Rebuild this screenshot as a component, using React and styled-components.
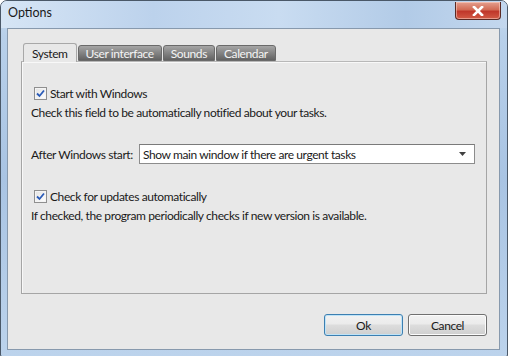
import React, { useState } from "react";
import styled, { createGlobalStyle } from "styled-components";

const GlobalStyle = createGlobalStyle`
  html, body {
    margin: 0;
    padding: 0;
    background: #ffffff;
  }
  body {
    font-family: Lato, "Liberation Sans", sans-serif;
    font-size: 12px;
    letter-spacing: -0.4px;
    color: #1a1a1a;
  }
`;

const tabs = ["System", "User interface", "Sounds", "Calendar"];

const CheckMark = () => (
  <svg width="9" height="9" viewBox="0 0 9 9">
    <path d="M1 4.5 L3.5 7 L8 1.5" fill="none" stroke="#2a5bb8" strokeWidth="1.8" />
  </svg>
);

const CheckRow = ({ label, checked, onToggle }) => (
  <CheckLine onClick={onToggle}>
    <Box>{checked && <CheckMark />}</Box>
    <span>{label}</span>
  </CheckLine>
);

export default function App() {
  const [active, setActive] = useState(0);
  const [startWin, setStartWin] = useState(true);
  const [updates, setUpdates] = useState(true);

  return (
    <>
      <GlobalStyle />
      <Window>
        <TitleBar>
          <Title>Options</Title>
          <CloseButton>
            <svg width="12" height="10" viewBox="0 0 12 10">
              <path d="M2 1 L10 9 M10 1 L2 9" stroke="#ffffff" strokeWidth="2.6" strokeLinecap="square" />
            </svg>
          </CloseButton>
        </TitleBar>
        <Client>
          <TabStrip>
            {tabs.map((t, i) => (
              <Tab key={t} $active={i === active} onClick={() => setActive(i)}>
                {t}
              </Tab>
            ))}
          </TabStrip>
          <Panel>
            <CheckRow label="Start with Windows" checked={startWin} onToggle={() => setStartWin(!startWin)} />
            <Hint>Check this field to be automatically notified about your tasks.</Hint>
            <SelectRow>
              <FieldLabel>After Windows start:</FieldLabel>
              <Select>
                <span>Show main window if there are urgent tasks</span>
                <svg width="7" height="4" viewBox="0 0 7 4">
                  <path d="M0 0 H7 L3.5 4 Z" fill="#404040" />
                </svg>
              </Select>
            </SelectRow>
            <CheckRow label="Check for updates automatically" checked={updates} onToggle={() => setUpdates(!updates)} />
            <Hint>If checked, the program periodically checks if new version is available.</Hint>
          </Panel>
          <ButtonRow>
            <Button $default>Ok</Button>
            <Button>Cancel</Button>
          </ButtonRow>
        </Client>
      </Window>
    </>
  );
}

const Window = styled.div`
  width: 506px;
  height: 355px;
  display: flex;
  flex-direction: column;
  border: 1px solid #4a5868;
  border-radius: 7px 7px 2px 2px;
  background: linear-gradient(180deg, #c8dbef 0%, #b8d0ea 10%, #a9c4e3 50%, #bcd3ec 100%);
  overflow: hidden;
`;

const TitleBar = styled.div`
  height: 28px;
  display: flex;
  align-items: flex-start;
  justify-content: space-between;
  padding-left: 7px;
  padding-right: 6px;
  background: linear-gradient(90deg, #d6e5f5 0%, #bcd2ec 30%, #c9dcf1 55%, #b2cbe7 80%, #c3d7ee 100%);
`;

const Title = styled.div`
  margin-top: 4px;
  font-size: 12.5px;
  letter-spacing: 0;
  color: #1a1a1a;
`;

const CloseButton = styled.div`
  width: 44px;
  height: 17px;
  margin-top: 1px;
  display: flex;
  align-items: center;
  justify-content: center;
  border: 1px solid #5a2a24;
  border-top: none;
  border-radius: 0 0 4px 4px;
  background: linear-gradient(180deg, #e4a08f 0%, #d26b55 45%, #c0372a 55%, #d25b45 100%);
  box-shadow: inset 0 0 0 1px rgba(255, 220, 210, 0.5);
`;

const Client = styled.div`
  flex: 1;
  margin: 0 7px 6px 6px;
  display: flex;
  flex-direction: column;
  padding: 14px 12px 13px 13px;
  background: #e8e8e8;
  border: 1px solid #8799ad;
`;

const TabStrip = styled.div`
  height: 18px;
  display: flex;
  align-items: flex-end;
  gap: 1px;
  padding-left: 2px;
  position: relative;
  z-index: 1;
`;

const Tab = styled.div`
  height: ${(p) => (p.$active ? "19px" : "16px")};
  margin-bottom: ${(p) => (p.$active ? "-1px" : "0")};
  padding: 0 ${(p) => (p.$active ? "8px" : "7px")};
  display: flex;
  align-items: center;
  box-sizing: border-box;
  border: 1px solid ${(p) => (p.$active ? "#a8a8a8" : "#6a6a6a")};
  border-bottom: ${(p) => (p.$active ? "none" : "1px solid #6a6a6a")};
  border-radius: 3px 3px 0 0;
  background: ${(p) =>
    p.$active
      ? "#e8e8e8"
      : "linear-gradient(180deg, #a6a6a6 0%, #8a8a8a 40%, #626262 100%)"};
  color: ${(p) => (p.$active ? "#1a1a1a" : "#f4f4f4")};
  cursor: default;
  white-space: nowrap;
`;

const Panel = styled.div`
  height: 233px;
  box-sizing: border-box;
  display: flex;
  flex-direction: column;
  padding: 23px 11px 0 9px;
  border: 1px solid #a5a5a5;
  border-top-color: #b8b8b8;
  box-shadow: inset 1px 1px 0 #f8f8f8;
`;

const CheckLine = styled.div`
  height: 16px;
  display: flex;
  align-items: center;
  gap: 3px;
  padding-left: 3px;
  cursor: default;
`;

const Box = styled.div`
  width: 11px;
  height: 11px;
  display: flex;
  align-items: center;
  justify-content: center;
  border: 1px solid #8f8f8f;
  background: linear-gradient(135deg, #e2e2e2 0%, #ffffff 100%);
  box-shadow: inset 0 0 0 1px #f4f4f4;
`;

const Hint = styled.div`
  height: 16px;
  line-height: 16px;
  margin-top: 4px;
  margin-bottom: 23px;
  white-space: nowrap;
`;

const SelectRow = styled.div`
  height: 20px;
  display: flex;
  align-items: center;
  justify-content: space-between;
  margin-bottom: 24px;
`;

const FieldLabel = styled.span`
  white-space: nowrap;
  flex-shrink: 0;
`;

const Select = styled.div`
  width: 336px;
  height: 20px;
  box-sizing: border-box;
  display: flex;
  align-items: center;
  justify-content: space-between;
  padding: 0 8px 0 3px;
  background: #ffffff;
  border: 1px solid #8c8c8c;
  border-top-color: #7a7a7a;
`;

const ButtonRow = styled.div`
  margin-top: 20px;
  display: flex;
  justify-content: flex-end;
  gap: 5px;
`;

const Button = styled.div`
  width: 79px;
  height: 22px;
  box-sizing: border-box;
  display: flex;
  align-items: center;
  justify-content: center;
  border: 1px solid ${(p) => (p.$default ? "#3c7fb1" : "#707070")};
  border-radius: 3px;
  background: linear-gradient(180deg, #f2f2f2 0%, #ebebeb 45%, #dddddd 50%, #cfcfcf 100%);
  box-shadow: inset 0 0 0 1px ${(p) => (p.$default ? "#bfe3f7" : "#fcfcfc")};
  color: #1a1a1a;
`;
